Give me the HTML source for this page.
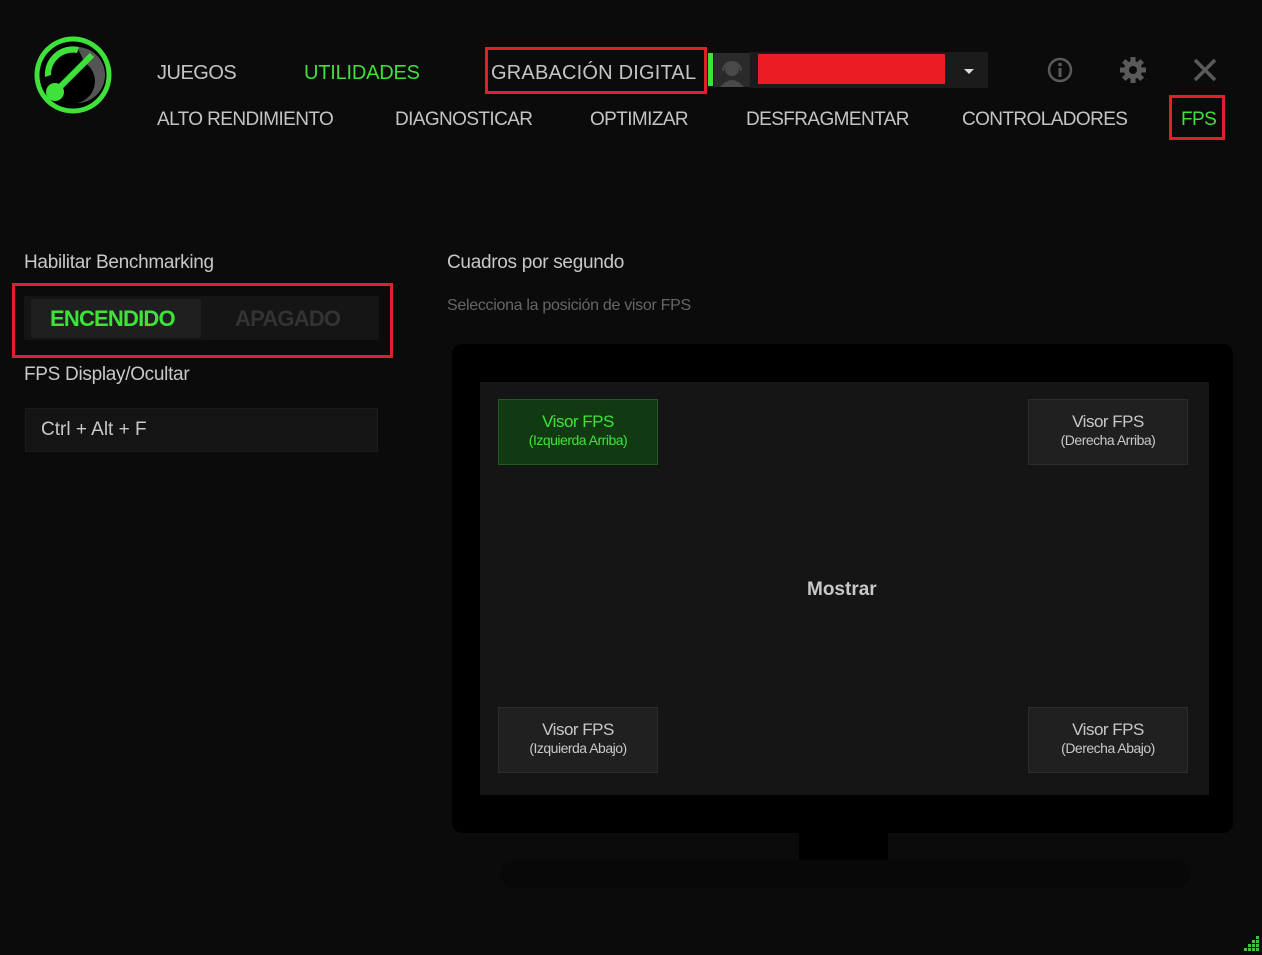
<!DOCTYPE html>
<html><head><meta charset="utf-8"><style>
*{margin:0;padding:0;box-sizing:border-box}
body{width:1262px;height:955px;background:#0b0b0b;font-family:"Liberation Sans",sans-serif;position:relative;overflow:hidden;color:#c8c8c8}
.a{position:absolute;white-space:nowrap}
.nav{font-size:20px;color:#c4c4c4;letter-spacing:-0.5px}
.sub{font-size:19px;color:#c4c4c4;letter-spacing:-0.6px}
.g{color:#3ee23a}
.red{position:absolute;border:3px solid #e0212b}
.btn{position:absolute;width:160px;height:66px;background:#202020;border:1px solid #2c2c2c;text-align:center;color:#c8c8c8;font-size:17px;letter-spacing:-0.5px;padding-top:12px;line-height:19px}
.btn small{font-size:14px;display:block}
</style></head><body>
<svg class="a" style="left:33px;top:35px" width="80" height="80" viewBox="0 0 80 80">
<circle cx="40" cy="40" r="36" fill="#000" stroke="#3ee23a" stroke-width="5"/>
<path d="M44 12 A28 28 0 0 1 44 68 A22 22 0 0 0 52 28Z" fill="#555"/>
<path d="M12 42 A28 28 0 0 1 46 12 L44 18 A22 22 0 0 0 18 40Z" fill="#3ee23a"/>
<line x1="22" y1="57" x2="59" y2="20" stroke="#3ee23a" stroke-width="6"/>
<circle cx="22" cy="57" r="9" fill="#3ee23a"/>
</svg>
<div class="a nav" style="left:157px;top:62px">JUEGOS</div>
<div class="a nav g" style="left:304px;top:62px;letter-spacing:-0.2px">UTILIDADES</div>
<div class="red" style="left:485px;top:47px;width:222px;height:47px"></div>
<div class="a nav" style="left:491px;top:62px;letter-spacing:0.2px">GRABACIÓN DIGITAL</div>
<div class="a" style="left:708px;top:53px;width:5px;height:33px;background:#3ee23a"></div>
<div class="a" style="left:714px;top:53px;width:36px;height:34px;background:#2a2a2a"></div>
<svg class="a" style="left:716px;top:55px" width="32" height="32" viewBox="0 0 32 32"><circle cx="16" cy="14" r="7" fill="#4a4a4a"/><path d="M4 32 Q16 18 28 32Z" fill="#4a4a4a"/><path d="M7 16 A9 9 0 0 1 25 16" fill="none" stroke="#4a4a4a" stroke-width="2"/></svg>
<div class="a" style="left:750px;top:52px;width:238px;height:36px;background:#1b1b1b"></div>
<div class="a" style="left:758px;top:54px;width:187px;height:30px;background:#ec1c24"></div>
<div class="a" style="left:964px;top:69px;border-left:5px solid transparent;border-right:5px solid transparent;border-top:5px solid #ddd"></div>
<svg class="a" style="left:1046px;top:56px" width="28" height="28" viewBox="0 0 28 28"><circle cx="14" cy="14" r="11" fill="none" stroke="#5a5a5a" stroke-width="2.5"/><rect x="12.5" y="12" width="3" height="9" fill="#5a5a5a"/><circle cx="14" cy="8.5" r="1.8" fill="#5a5a5a"/></svg>
<svg class="a" style="left:1118px;top:55px" width="30" height="30" viewBox="0 0 30 30"><g fill="#5a5a5a"><circle cx="15" cy="15" r="9"/><rect x="12.5" y="2" width="5" height="26"/><rect x="12.5" y="2" width="5" height="26" transform="rotate(45 15 15)"/><rect x="12.5" y="2" width="5" height="26" transform="rotate(90 15 15)"/><rect x="12.5" y="2" width="5" height="26" transform="rotate(135 15 15)"/></g><circle cx="15" cy="15" r="4" fill="#0b0b0b"/></svg>
<svg class="a" style="left:1193px;top:58px" width="24" height="24" viewBox="0 0 24 24"><path d="M2 2L22 22M22 2L2 22" stroke="#5a5a5a" stroke-width="3.5"/></svg>
<div class="a sub" style="left:157px;top:109px">ALTO RENDIMIENTO</div>
<div class="a sub" style="left:395px;top:109px">DIAGNOSTICAR</div>
<div class="a sub" style="left:590px;top:109px">OPTIMIZAR</div>
<div class="a sub" style="left:746px;top:109px">DESFRAGMENTAR</div>
<div class="a sub" style="left:962px;top:109px">CONTROLADORES</div>
<div class="red" style="left:1169px;top:95px;width:56px;height:45px"></div>
<div class="a sub g" style="left:1181px;top:109px">FPS</div>

<div class="a" style="left:24px;top:252px;font-size:19px;color:#c8c8c8;letter-spacing:-0.3px">Habilitar Benchmarking</div>
<div class="red" style="left:12px;top:283px;width:381px;height:75px"></div>
<div class="a" style="left:24px;top:296px;width:355px;height:44px;background:#151515;border-radius:2px"></div>
<div class="a" style="left:31px;top:299px;width:170px;height:39px;background:#1f1f1f;border-radius:2px"></div>
<div class="a g" style="left:50px;top:306px;font-size:22px;font-weight:bold;letter-spacing:-0.8px">ENCENDIDO</div>
<div class="a" style="left:235px;top:306px;font-size:22px;font-weight:bold;color:#333;letter-spacing:-0.8px">APAGADO</div>
<div class="a" style="left:24px;top:364px;font-size:19px;color:#c8c8c8;letter-spacing:-0.3px">FPS Display/Ocultar</div>
<div class="a" style="left:25px;top:408px;width:353px;height:44px;background:#141414;border:1px solid #1c1c1c"></div>
<div class="a" style="left:41px;top:419px;font-size:19px;color:#c8c8c8">Ctrl + Alt + F</div>

<div class="a" style="left:447px;top:252px;font-size:19px;color:#c8c8c8;letter-spacing:-0.3px">Cuadros por segundo</div>
<div class="a" style="left:447px;top:297px;font-size:16px;color:#666;letter-spacing:-0.3px">Selecciona la posición de visor FPS</div>
<div class="a" style="left:452px;top:344px;width:781px;height:489px;background:#000;border-radius:10px"></div>
<div class="a" style="left:799px;top:833px;width:89px;height:27px;background:#000"></div>
<div class="a" style="left:500px;top:860px;width:690px;height:28px;background:#080808;border-radius:14px"></div>
<div class="a" style="left:480px;top:382px;width:729px;height:413px;background:#151515"></div>
<div class="btn" style="left:498px;top:399px;background:#123a12;border-color:#1f5a1f;color:#3ee23a">Visor FPS<small>(Izquierda Arriba)</small></div>
<div class="btn" style="left:1028px;top:399px">Visor FPS<small>(Derecha Arriba)</small></div>
<div class="btn" style="left:498px;top:707px">Visor FPS<small>(Izquierda Abajo)</small></div>
<div class="btn" style="left:1028px;top:707px">Visor FPS<small>(Derecha Abajo)</small></div>
<div class="a" style="left:807px;top:579px;font-size:19px;font-weight:bold;color:#c8c8c8">Mostrar</div>
<svg class="a" style="left:1244px;top:936px" width="16" height="16" viewBox="0 0 16 16" fill="#3ec43a"><rect x="12" y="0" width="3" height="3"/><rect x="8" y="4" width="3" height="3"/><rect x="12" y="4" width="3" height="3"/><rect x="4" y="8" width="3" height="3"/><rect x="8" y="8" width="3" height="3"/><rect x="12" y="8" width="3" height="3"/><rect x="0" y="12" width="3" height="3"/><rect x="4" y="12" width="3" height="3"/><rect x="8" y="12" width="3" height="3"/><rect x="12" y="12" width="3" height="3"/></svg>
</body></html>
